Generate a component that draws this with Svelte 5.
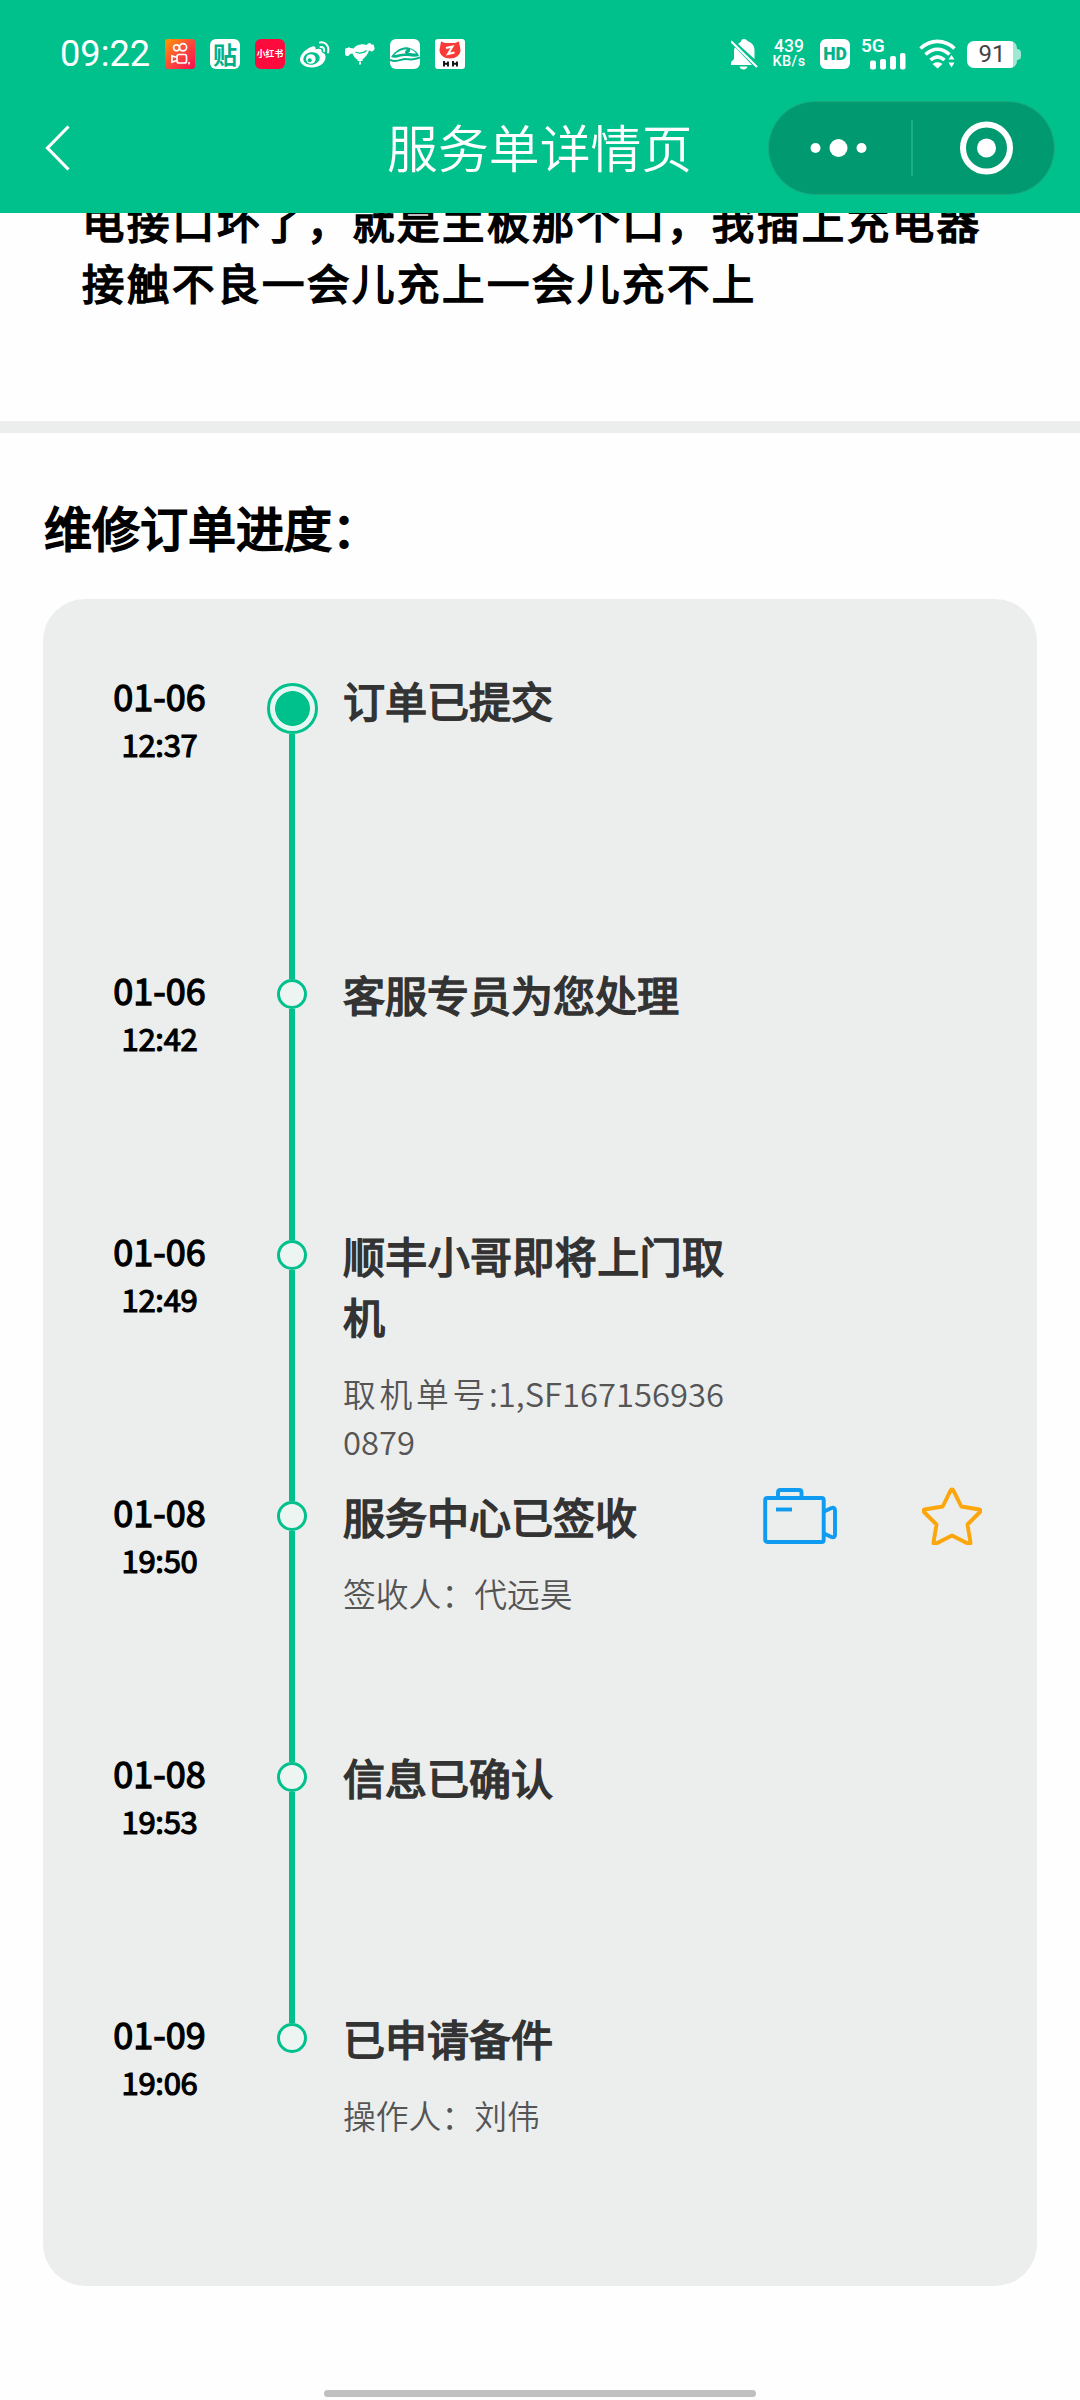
<script>
  const steps = [
    { date: '01-06', time: '12:37', title: '订单已提交', first: true },
    { date: '01-06', time: '12:42', title: '客服专员为您处理' },
    { date: '01-06', time: '12:49', title: '顺丰小哥即将上门取机', note: '取机单号:1,SF1671569360879' },
    { date: '01-08', time: '19:50', title: '服务中心已签收', note: '签收人：代远昊', actions: true },
    { date: '01-08', time: '19:53', title: '信息已确认' },
    { date: '01-09', time: '19:06', title: '已申请备件', note: '操作人：刘伟', last: true }
  ];
</script>

<div class="screen">
  <header>
    <div class="status">
      <span class="clock">09:22</span>
      <div class="apps">
        <svg class="app" viewBox="0 0 30 30">
          <defs>
            <linearGradient id="ks" x1="0" y1="0" x2="1" y2="1">
              <stop offset="0" stop-color="#ff9a00" />
              <stop offset=".5" stop-color="#fb4a3c" />
              <stop offset="1" stop-color="#fb0a50" />
            </linearGradient>
          </defs>
          <rect width="30" height="30" rx="3" fill="url(#ks)" />
          <g fill="none" stroke="#fff" stroke-width="1.700">
            <circle cx="11.500" cy="8.800" r="3" />
            <circle cx="18" cy="8.300" r="3.600" />
            <rect x="12" y="15.500" width="9.500" height="8.500" rx="2" />
            <path d="M12 18.500l-5-1.500v6l5-1.500" />
          </g>
          <path d="M24 23v2.500" stroke="#fff" stroke-width="1.500" />
        </svg>
        <span class="app tie">贴</span>
        <span class="app xhs">小红书</span>
        <svg class="app" viewBox="0 0 30 30">
          <path d="M11 8c3-1.500 5-1 4.500 2.500 4-1.500 7-.5 6 2.500 3 1 4.500 3 4 6-1 6-7 9.500-13.500 9.500S0 25 0 20.500C0 16 5 10.500 11 8z" fill="#fff" />
          <ellipse cx="11.500" cy="19.500" rx="8.300" ry="6.300" fill="#00c08b" transform="rotate(-8 11.500 19.500)" />
          <circle cx="10.800" cy="20" r="4.800" fill="#fff" />
          <circle cx="9.700" cy="21.200" r="2" fill="#00c08b" />
          <g fill="none" stroke="#fff" stroke-width="2" stroke-linecap="round">
            <path d="M20 3.500c6-1 9.500 4 8 10" />
            <path d="M20.500 8c2.500-.3 4 1.500 3.500 4" />
          </g>
        </svg>
        <svg class="app" viewBox="0 0 30 30">
          <path d="M0 11q0-2.500 2.500-2 1-1.500 3 0l3 .5c3-4 9-5 13-3.500l1.500-1.500q2.500-1.500 3.500 1 3-.5 2.500 2 1.500 2.500-.5 4-1.500 1.500-3 .5l-1.500-.5c-1 4-4 7-6.500 9v1.500h-5v-1.500c-2.500-1-4-3.500-5-6l-2.500.5q-1 2.500-3 2-2 0-2-2.500Q-.5 13 0 11z" fill="#fff" />
          <path d="M15 21.500q-2 3 0 4.500 2-1.500 0-4.500z" fill="#fff" />
          <path d="M10.500 13c3.500 2 8.500 1 11-1.500" fill="none" stroke="#00c08b" stroke-width="1.300" />
        </svg>
        <svg class="app" viewBox="0 0 30 30">
          <rect width="30" height="30" rx="6" fill="#fff" />
          <path d="M1 18C6 11 12 7.500 18 8.500c5 1 10 4.500 11 8.500-5 1.500-9 0-14 0-6 0-8 3-14 1z" fill="#00b389" />
          <path d="M4 16c4-4 9-6 13-5.500-2 2-3 2.500-1 4C11 14 8 16 4 16zM20 10c3 1 5 3 6 4.500-3 0-5-.5-8-.5 2-1 2.500-2 2-4z" fill="#fff" />
          <path d="M0 21c8 3 11-1.500 16-1 5 .3 8 1.500 14-1.500" fill="none" stroke="#00b389" stroke-width="2" />
        </svg>
        <svg class="app" viewBox="0 0 30 30">
          <rect width="30" height="30" rx="3" fill="#fff" />
          <path d="M6 2.500l4 1.500h10l4-1.500 1.500 8.500c0 5-5 8.500-10.500 8.500S4.500 16 4.500 11z" fill="#fa3a36" />
          <path d="M11 9l6.500-1.500-4.500 7.500 6.500-1.500" fill="none" stroke="#fff" stroke-width="2" />
          <path d="M9 22v5.500M8.500 24.800h5M13 22.500v5M18 22v5.500M17.500 24.800h5M22 22.500v5" fill="none" stroke="#111" stroke-width="1.900" />
        </svg>
      </div>
      <div class="signals">
        <svg class="bell" viewBox="0 0 28 31">
          <path d="M5 7.500L24 26H0v-3l3-3v-8c0-2 .5-3.500 2-4.500zM7 5l3-2.500C10 1 11 0 13 0s3 1 3.500 2C21 3.500 23.500 7 23.500 11v9zM8.500 27.500h8c-.5 2-2 3-4 3s-3.500-1-4-3z" fill="#fff" />
          <path d="M.8 2l25 26" stroke="#00c08b" stroke-width="4" />
          <path d="M0 2.200L26 28" stroke="#fff" stroke-width="2.200" />
        </svg>
        <div class="speed"><b>439</b><i>KB/s</i></div>
        <span class="hd">HD</span>
        <div class="cell">
          <span>5G</span>
          <svg viewBox="0 0 36 17">
            <g fill="#fff">
              <rect x="0" y="7.500" width="6" height="9" rx="2" />
              <rect x="10" y="6" width="6" height="10.500" rx="2" />
              <rect x="20" y="3" width="6" height="13.500" rx="2" />
              <rect x="30" y="0" width="5.500" height="16.500" rx="2" />
            </g>
          </svg>
        </div>
        <svg class="wifi" viewBox="0 0 38 30">
          <g fill="none" stroke="#fff" stroke-width="3.600">
            <path d="M1.500 9.500c10-9.500 24-9.500 34 0" />
            <path d="M6.500 15.500c7.500-7 16.500-7 24 0" />
            <path d="M11.500 21c4.500-4 9.500-4 14 0" />
          </g>
          <path d="M13.500 25c3-2.500 7-2.500 10 0l-5 4.500z" fill="#fff" />
          <path d="M29.500 20.500l3-4.500 3 4.500zM29.500 23.500h6l-3 5z" fill="#fff" />
        </svg>
        <div class="battery"><span>91</span></div>
      </div>
    </div>
    <div class="nav">
      <svg class="back" viewBox="0 0 26 46"><path d="M23.500 1.500L2.500 23l21 21.500" fill="none" stroke="#fff" stroke-width="3.200" /></svg>
      <h1>服务单详情页</h1>
      <div class="capsule">
        <svg viewBox="0 0 284 92">
          <g fill="#fff">
            <circle cx="46.500" cy="46" r="5" />
            <circle cx="69.500" cy="46" r="9" />
            <circle cx="92.500" cy="46" r="5" />
            <circle cx="217.500" cy="46" r="9.500" />
          </g>
          <path d="M143 18v56" stroke="#1dad82" stroke-width="2" />
          <circle cx="217.500" cy="46" r="23.500" fill="none" stroke="#fff" stroke-width="6" />
        </svg>
      </div>
    </div>
  </header>

  <section class="issue">
    <p>电接口坏了，就是主板那个口，我插上充电器<br />接触不良一会儿充上一会儿充不上</p>
  </section>

  <section class="progress">
    <h2>维修订单进度：</h2>
    <ol>
      {#each steps as s}
        <li class:first={s.first} class:last={s.last}>
          <div class="when"><span class="date">{s.date}</span><span class="time">{s.time}</span></div>
          <div class="track"><i class="stub"></i><i class="dot"></i><i class="line"></i></div>
          <div class="what">
            <h3>{s.title}</h3>
            {#if s.note}<p>{s.note}</p>{/if}
          </div>
          {#if s.actions}
            <div class="actions">
              <svg class="camera" viewBox="0 0 76 58">
                <g fill="none" stroke="#0f9bf0" stroke-width="3.900" stroke-linejoin="round" stroke-linecap="round">
                  <rect x="2.200" y="11" width="58.500" height="44" rx="2" />
                  <path d="M15 10.500V5.500q0-2.500 2.500-2.500H36q2.500 0 2.500 2.500v5" />
                  <path d="M61 24.500l7.500-3.500q3.500-1 3.500 2.500v24q0 3.500-3.500 2.500L61 46.500" />
                </g>
                <path d="M13 22.500h16" stroke="#0f9bf0" stroke-width="3.900" />
              </svg>
              <svg class="star" viewBox="0 0 60 58">
                <path d="M30 2.500q1 0 1.500 1.200L39.300 19.500l18.200 3q2 .8.500 2.500L45.500 37.500l3 18q0 2.200-2.200 1.300L30 48.500l-16.300 8.300q-2.200.9-2.200-1.300l3-18L2 25q-1.500-1.700.5-2.500l18.200-3L28.500 3.700Q29 2.500 30 2.500z" fill="none" stroke="#fba60d" stroke-width="3.900" stroke-linejoin="round" />
              </svg>
            </div>
          {/if}
        </li>
      {/each}
    </ol>
  </section>

  <div class="home"></div>
</div>

<style>
  :global(body) { background: #fff; }
  .screen {
    width: 1080px; height: 2400px; overflow: hidden; display: flex; flex-direction: column;
    background: #fefefe; color: #000; font-family: "Noto Sans CJK SC", sans-serif;
  }
  h1, h2, h3, p, ol { margin: 0; padding: 0; font-weight: 400; }
  svg { display: block; flex: none; }
  header { height: 213px; flex: none; background: #00c08b; color: #fff; }
  .status { height: 101px; display: flex; align-items: center; box-sizing: border-box; padding: 7px 63px 0 60px; font-family: Roboto, sans-serif; }
  .clock { width: 105px; font-size: 36.200px; line-height: 44px; white-space: nowrap; }
  .apps { display: flex; gap: 15px; }
  .app { width: 30px; height: 30px; flex: none; }
  .tie, .xhs { border-radius: 6px; display: flex; align-items: center; justify-content: center; font-family: "Noto Sans CJK SC", sans-serif; font-weight: 700; white-space: nowrap; }
  .tie { background: #fff; color: #00b08a; font-size: 24px; line-height: 28px; }
  .xhs { background: #fe0a3c; font-size: 8.800px; line-height: 30px; }
  .signals { display: flex; align-items: center; margin-left: auto; }
  .bell { width: 28px; height: 31px; }
  .speed { width: 34px; margin-left: 13px; display: flex; flex-direction: column; align-items: center; }
  .speed b { font-size: 17.500px; line-height: 16px; font-weight: 500; }
  .speed i { font-size: 14.500px; line-height: 16px; font-weight: 500; font-style: normal; letter-spacing: .4px; }
  .hd { width: 30px; height: 30px; margin-left: 14px; border-radius: 6px; background: #fff; color: #00b389; font-size: 17.500px; line-height: 31px; font-weight: 900; text-align: center; }
  .cell { width: 46px; height: 30px; margin-left: 11px; }
  .cell span { display: block; font-size: 19px; line-height: 14px; font-weight: 600; }
  .cell svg { width: 36px; height: 17px; margin-left: 9px; }
  .wifi { width: 38px; height: 30px; margin-left: 12px; }
  .battery { width: 50px; height: 27px; margin-left: 10px; display: flex; align-items: center; border-radius: 7px; background: linear-gradient(90deg, #fff 92%, #9fe8d2 92%); position: relative; }
  .battery::after { content: ''; position: absolute; left: 50px; top: 8px; width: 4px; height: 11px; border-radius: 0 4px 4px 0; background: #9fe8d2; }
  .battery span { width: 50px; color: #444; font-size: 24px; line-height: 28px; text-align: center; }

  .nav { height: 94px; display: grid; grid-template-columns: 387px 1fr 287px 25px; align-items: center; }
  .back { width: 26px; height: 46px; margin-left: 45px; }
  h1 { font-size: 50.900px; line-height: 90px; margin-top: -4px; font-weight: 350; white-space: nowrap; }
  .capsule { width: 287px; height: 94px; box-sizing: border-box; border: 1px solid #1ba980; border-radius: 47px; background: #009970; }
  .capsule svg { width: 284px; height: 92px; }

  .issue { height: 208px; flex: none; overflow: hidden; border-bottom: 12px solid #eceeed; }
  .issue p { margin: -22px 0 0 82px; font-size: 42.400px; line-height: 60.500px; letter-spacing: 2.600px; white-space: nowrap; -webkit-text-stroke: 1.700px #000; }

  .progress { padding: 58px 43px 0; }
  h2 { font-size: 48px; line-height: 70px; padding: 0 0 38px 1px; -webkit-text-stroke: 2px #000; }
  ol { list-style: none; height: 1687px; box-sizing: border-box; padding-top: 70px; border-radius: 42px; background: #eceeed; }
  li { height: 261px; display: grid; grid-template-columns: 232px 34px 34px 381px 1fr; }
  li.first { height: 294px; }
  .when { grid-column: 1; display: flex; flex-direction: column; align-items: center; padding: 2px 0 0 1px; }
  .date { font-size: 36px; line-height: 48px; -webkit-text-stroke: 1.300px #000; }
  .time { font-size: 31px; line-height: 49px; letter-spacing: -.3px; -webkit-text-stroke: 1.200px #000; }
  .track { grid-column: 2; display: flex; flex-direction: column; align-items: center; width: 34px; }
  .track i { flex: none; box-sizing: border-box; }
  .stub { width: 6px; height: 16px; background: #00c08b; }
  .dot { width: 30px; height: 30px; border: 3px solid #00c08b; border-radius: 50%; background: #edf5f3; }
  .track .line { width: 6px; flex: 1; background: #00c08b; }
  .first .stub { height: 14px; background: transparent; }
  .first .dot { width: 51px; height: 51px; background: radial-gradient(circle, #00c08b 17px, #e6f6f2 17.800px); }
  .last .line { visibility: hidden; }
  .what { grid-column: 4; color: #333; }
  h3 { font-size: 42px; line-height: 61px; text-align: justify; word-break: break-all; -webkit-text-stroke: 1.700px #333; }
  .what p { margin-top: 23px; font-size: 32.800px; line-height: 48px; font-weight: 350; color: #555; text-align: justify; word-break: break-all; }
  .actions { grid-column: 5; display: flex; justify-content: space-between; padding: 2px 55px 0 39px; }
  .camera { width: 76px; height: 58px; }
  .star { width: 60px; height: 58px; }
  .home { width: 432px; height: 7px; margin: 104px auto 0; flex: none; border-radius: 4px; background: #c0c0c0; }
</style>
